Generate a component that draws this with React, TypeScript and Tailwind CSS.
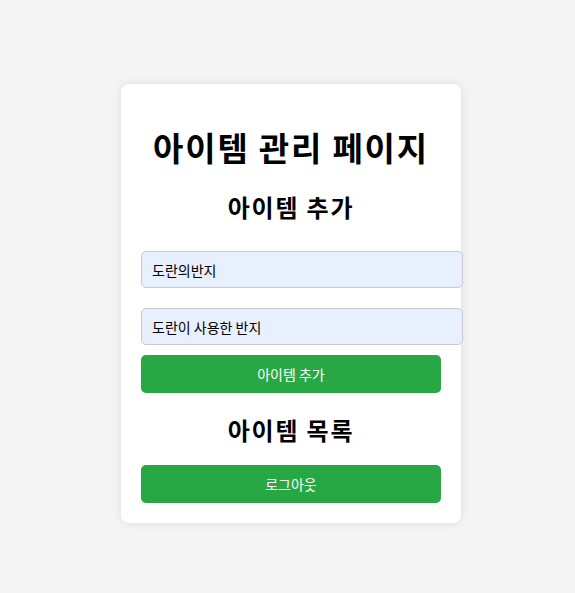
export default function App() {
  const font = { fontFamily: '"Noto Sans CJK KR", "Noto Sans", sans-serif' };
  return (
    <div
      className="min-h-screen w-full bg-[#f4f4f4] flex justify-center items-start pt-[84px] pl-[7px]"
      style={font}
    >
      <div className="w-[340px] bg-white rounded-lg shadow-[0_0_10px_rgba(0,0,0,0.1)] p-5 flex flex-col">
        <h1 className="mt-5 h-[47px] leading-[47px] text-[33px] tracking-[1.8px] font-bold text-black text-center">
          아이템 관리 페이지
        </h1>
        <h2 className="mt-[19px] h-[33px] leading-[33px] text-[24px] tracking-[1.8px] font-bold text-black text-center">
          아이템 추가
        </h2>
        <input
          className="mt-[28px] w-[322px] h-[37px] px-[10px] border border-[#c8c8d0] rounded-[5px] bg-[#e8f0fe] text-[14px] text-black outline-none"
          defaultValue="도란의반지"
        />
        <input
          className="mt-5 w-[322px] h-[37px] px-[10px] border border-[#c8c8d0] rounded-[5px] bg-[#e8f0fe] text-[14px] text-black outline-none"
          defaultValue="도란이 사용한 반지"
        />
        <button className="mt-[10px] w-full h-[38px] rounded-[5px] bg-[#28a745] text-white text-[14px]">
          아이템 추가
        </button>
        <h2 className="mt-[20px] h-[33px] leading-[33px] text-[24px] tracking-[1.8px] font-bold text-black text-center">
          아이템 목록
        </h2>
        <button className="mt-[19px] w-full h-[38px] rounded-[5px] bg-[#28a745] text-white text-[14px]">
          로그아웃
        </button>
      </div>
    </div>
  );
}
